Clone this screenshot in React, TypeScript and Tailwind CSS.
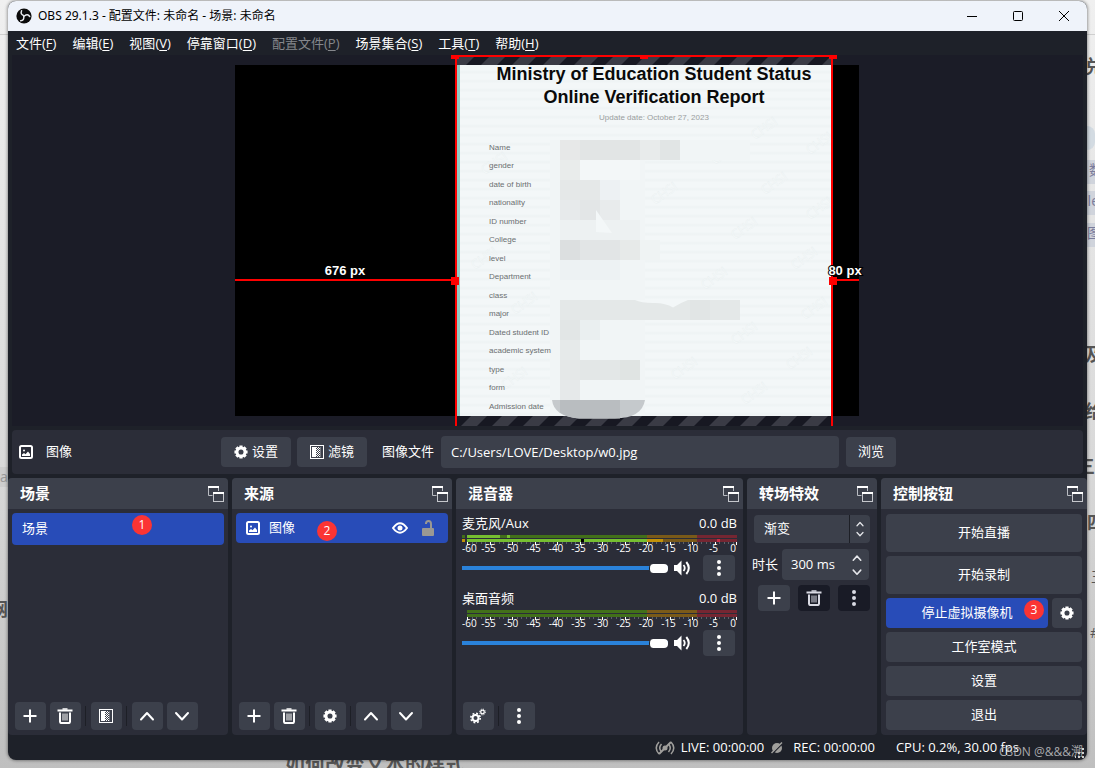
import type { ReactNode } from "react";

const menus = [
  { label: "文件", hotkey: "F" },
  { label: "编辑", hotkey: "E" },
  { label: "视图", hotkey: "V" },
  { label: "停靠窗口", hotkey: "D" },
  { label: "配置文件", hotkey: "P", disabled: true },
  { label: "场景集合", hotkey: "S" },
  { label: "工具", hotkey: "T" },
  { label: "帮助", hotkey: "H" },
];

const reportFields = [
  "Name",
  "gender",
  "date of birth",
  "nationality",
  "ID number",
  "College",
  "level",
  "Department",
  "class",
  "major",
  "Dated student ID",
  "academic system",
  "type",
  "form",
  "Admission date",
];

// x, y, width, height, fill
const mosaic: [number, number, number, number, string][] = [
  [315, 85, 95, 280, "#f1f5f6"],
  [405, 85, 110, 20, "#f1f5f6"],
  [325, 85, 20, 20, "#e7e8e8"],
  [345, 85, 60, 20, "#e2e5e5"],
  [405, 85, 20, 20, "#e8ebeb"],
  [425, 85, 20, 20, "#e1e5e5"],
  [325, 105, 20, 20, "#e9eceb"],
  [345, 105, 60, 20, "#f3f7f8"],
  [325, 125, 40, 20, "#e5e8e8"],
  [365, 125, 20, 20, "#edf1f3"],
  [325, 145, 20, 20, "#e7eaeb"],
  [345, 145, 20, 20, "#e3e6e7"],
  [365, 145, 20, 20, "#e8ebec"],
  [325, 165, 80, 20, "#edf1f2"],
  [325, 185, 20, 20, "#dcdfe0"],
  [345, 185, 40, 20, "#e2e5e6"],
  [385, 185, 20, 20, "#e7eae9"],
  [405, 185, 20, 20, "#eff3f3"],
  [325, 205, 60, 20, "#edf2f3"],
  [325, 245, 180, 20, "#e4e8e8"],
  [455, 245, 20, 20, "#e1e5e5"],
  [325, 265, 20, 20, "#e2e6e6"],
  [345, 265, 20, 20, "#eaeff0"],
  [325, 285, 20, 20, "#e6eaea"],
  [325, 305, 20, 20, "#e5e8e8"],
  [345, 305, 60, 20, "#e3e7e7"],
  [385, 305, 20, 20, "#e0e4e3"],
  [325, 325, 20, 20, "#e6e9ea"],
];

const watermarks = [
  [250, 120], [520, 85], [480, 110], [575, 100], [530, 140], [420, 150], [575, 165],
  [500, 185], [240, 215], [560, 215], [470, 235], [570, 265], [280, 260], [500, 290],
  [555, 315], [440, 325], [270, 335], [510, 350],
];

function ObsLogo() {
  return (
    <svg width="16" height="16" viewBox="0 0 16 16" fill="none">
      <circle cx="8" cy="8" r="7.6" fill="#0b0b0b" />
      <g stroke="#e6e8ec" strokeWidth="1.5" strokeLinecap="round">
        <path d="M5.600 2.800q-1.600 3.400 2.200 4.800" />
        <path d="M5.600 2.800q-1.600 3.400 2.200 4.800" transform="rotate(120 8 8)" />
        <path d="M5.600 2.800q-1.600 3.400 2.200 4.800" transform="rotate(240 8 8)" />
      </g>
    </svg>
  );
}

function Gear({ size = 16 }: { size?: number }) {
  return (
    <svg width={size} height={size} viewBox="0 0 16 16" fill="none" stroke="currentColor">
      <circle cx="8" cy="8" r="4.6" strokeWidth="3.4" />
      <path
        d="M8 0.500v3M8 12.500v3M0.500 8h3M12.500 8h3M2.700 2.700l2 2M11.300 11.300l2 2M13.300 2.700l-2 2M4.700 11.300l-2 2"
        strokeWidth="3.600"
      />
    </svg>
  );
}

function Gears() {
  return (
    <svg width="16" height="16" viewBox="0 0 16 16" fill="none" stroke="currentColor">
      <circle cx="5.5" cy="10" r="3" strokeWidth="2" />
      <circle cx="5.5" cy="10" r="4.7" strokeWidth="1.6" strokeDasharray="1.85 1.85" />
      <circle cx="12.5" cy="4" r="1.8" strokeWidth="1.3" />
      <circle cx="12.5" cy="4" r="2.9" strokeWidth="1" strokeDasharray="1.14 1.14" />
    </svg>
  );
}

function Plus() {
  return (
    <svg width="16" height="16" viewBox="0 0 16 16" stroke="currentColor" strokeWidth="2">
      <path d="M8 1.5v13M1.5 8h13" />
    </svg>
  );
}

function Trash() {
  return (
    <svg width="16" height="16" viewBox="0 0 16 16" fill="none" stroke="currentColor">
      <path d="M0.500 2.500h15" strokeWidth="2" />
      <path d="M5.5 1h5" strokeWidth="1.6" />
      <path d="M3 4.5v9q0 1.6 1.6 1.6h6.8q1.6 0 1.6-1.6v-9" strokeWidth="2" />
      <path d="M6 5.5v7M8 5.5v7M10 5.5v7" strokeWidth="1" />
    </svg>
  );
}

function FilterIcon() {
  return (
    <svg width="14" height="14" viewBox="0 0 14 14" shapeRendering="crispEdges">
      <rect x="0.5" y="0.5" width="13" height="13" fill="none" stroke="currentColor" />
      <rect x="2" y="2" width="4" height="10" fill="currentColor" />
      <path
        d="M6.5 2v10M8.5 2v10M7.5 3v10M9.5 3v10"
        stroke="currentColor"
        strokeDasharray="1 1"
      />
      <path d="M10.5 2v10" stroke="currentColor" strokeOpacity="0.3" />
    </svg>
  );
}

function Chevron({ up = false, size = 16 }: { up?: boolean; size?: number }) {
  return (
    <svg
      width={size}
      height={size}
      viewBox="0 0 16 16"
      fill="none"
      stroke="currentColor"
      strokeWidth={size < 16 ? 2.5 : 2}
      strokeLinecap="round"
      strokeLinejoin="round"
    >
      <path d={up ? "M2 11.5l6-6.5 6 6.5" : "M2 5l6 6.5L14 5"} />
    </svg>
  );
}

function Dots() {
  return (
    <svg width="16" height="18" viewBox="0 0 16 18" fill="currentColor">
      <circle cx="8" cy="3" r="2" />
      <circle cx="8" cy="9" r="2" />
      <circle cx="8" cy="15" r="2" />
    </svg>
  );
}

function Picture() {
  return (
    <svg width="14" height="14" viewBox="0 0 14 14">
      <rect x="1" y="1" width="12" height="12" rx="1.5" fill="none" stroke="white" strokeWidth="2" />
      <circle cx="5" cy="5.5" r="1" fill="white" />
      <path d="M3 11V9.5L5 8l1.5 1.2L9 6.5l2 2.5v2z" fill="white" />
    </svg>
  );
}

function Speaker() {
  return (
    <svg width="16" height="16" viewBox="0 0 16 16" fill="none" stroke="white">
      <path d="M0 5h3l4.500-4.500v15L3 11H0z" fill="white" stroke="none" />
      <path d="M9.500 5q2.500 3 0 6" strokeWidth="1.8" />
      <path d="M12.300 2q5 6 0 12" strokeWidth="2" />
    </svg>
  );
}

function FloatIcon() {
  return (
    <svg width="16" height="16" viewBox="0 0 16 16" fill="none">
      <path d="M4.5 9.5h-4V1M10.500 5V1" stroke="#b9bcc2" />
      <path d="M0 1h11" stroke="#fff" strokeWidth="2" />
      <rect x="5.500" y="7.500" width="10" height="8" fill="#3c404b" stroke="#c5c7cc" />
      <path d="M5 7h11" stroke="#fff" strokeWidth="2" />
    </svg>
  );
}

function ToolButton({ label, children }: { label: string; children: ReactNode }) {
  return (
    <button
      aria-label={label}
      className="flex h-7 w-[31px] items-center justify-center rounded bg-[#3c404b] pr-px text-white"
    >
      {children}
    </button>
  );
}

function Separator() {
  return <span className="h-5 w-0.5 border-l border-[#1d1f26]" />;
}

function Badge({ n, className }: { n: number; className: string }) {
  return (
    <span
      className={`absolute flex size-5 items-center justify-center rounded-full bg-[#fb3434] text-xs text-white ${className}`}
    >
      {n}
    </span>
  );
}

function Dock({ title, children }: { title: string; children: ReactNode }) {
  return (
    <section className="flex min-w-0 flex-col overflow-hidden rounded bg-[#2b2d38]">
      <header className="flex h-[31px] items-center justify-between bg-[#3c404b] pl-3 pr-1">
        <h2 className="text-[15px] font-bold">{title}</h2>
        <button aria-label={`${title} 浮动`}>
          <FloatIcon />
        </button>
      </header>
      {children}
    </section>
  );
}

function Meter({ active }: { active: boolean }) {
  const ticks = Array.from({ length: 61 }, (_, i) => i);
  return (
    <svg viewBox="0 0 275 20" className="w-full" aria-hidden="true">
      {[0, 4].map((y) => (
        <g key={y} shapeRendering="crispEdges">
          <rect x="5" y={y} width="180" height="3" fill="#42701a" />
          <rect x="185" y={y} width="50" height="3" fill="#7a5a19" />
          <rect x="235" y={y} width="40" height="3" fill="#752632" />
        </g>
      ))}
      {active && (
        <g shapeRendering="crispEdges">
          <rect x="0" y="0" width="3" height="3" fill="#42701a" />
          <rect x="0" y="4" width="3" height="3" fill="#c29208" />
          <rect x="5" y="0" width="33" height="3" fill="#76bf31" />
          <rect x="45" y="0" width="3" height="3" fill="#76bf31" />
          <rect x="5" y="4" width="180" height="3" fill="#76bf31" />
          <rect x="185" y="4" width="16" height="3" fill="#c29208" />
          <rect x="119" y="4" width="3" height="3" fill="#000" />
          <rect x="255" y="4" width="3" height="3" fill="#c52c45" />
        </g>
      )}
      {ticks.map((i) => (
        <rect
          key={i}
          x={Math.min(5 + Math.round(i * 4.5), 274)}
          y="7"
          width="1"
          height={i % 5 === 0 ? 3 : 2}
          fill={i % 5 === 0 ? "#fff" : "#5d616b"}
          shapeRendering="crispEdges"
        />
      ))}
      {ticks
        .filter((i) => i % 5 === 0)
        .map((i) => (
          <text
            key={i}
            x={i === 60 ? 274 : i === 0 ? 0 : 4 + i * 4.5}
            y="17"
            fontSize="10"
            fill="#fff"
            textAnchor={i === 60 ? "end" : i === 0 ? "start" : "middle"}
          >
            {i - 60}
          </text>
        ))}
    </svg>
  );
}

function Channel({ name, active = false }: { name: string; active?: boolean }) {
  return (
    <div className="flex h-[75px] flex-col">
      <div className="flex h-[26px] items-center justify-between pt-1">
        <span>{name}</span>
        <span>0.0 dB</span>
      </div>
      <Meter active={active} />
      <div className="flex items-center pr-0.5">
        <input
          type="range"
          aria-label={name}
          defaultValue={100}
          className="h-[9px] min-w-0 flex-1 appearance-none bg-[linear-gradient(#2a82da,#2a82da)] bg-[length:100%_4px] bg-center bg-no-repeat [&::-webkit-slider-thumb]:h-[9px] [&::-webkit-slider-thumb]:w-[19px] [&::-webkit-slider-thumb]:appearance-none [&::-webkit-slider-thumb]:rounded-sm [&::-webkit-slider-thumb]:border-l [&::-webkit-slider-thumb]:border-[#1e2129] [&::-webkit-slider-thumb]:bg-white"
        />
        <button aria-label={`${name} 静音`} className="ml-1.5 mr-[13px]">
          <Speaker />
        </button>
        <button
          aria-label={`${name} 选项`}
          className="flex h-[26px] w-8 items-center justify-center rounded bg-[#3c404b]"
        >
          <Dots />
        </button>
      </div>
    </div>
  );
}

function Preview() {
  return (
    <div className="mx-1 flex min-h-[371px] flex-1 items-center justify-center overflow-hidden bg-[#1b1c27] pr-px">
      <div className="relative h-[351px] w-[624px] shrink-0 bg-black">
        <div className="absolute inset-y-0 left-[222px] w-[375px] border-l-[3px] border-[#93cbc4] bg-[#f2f7f8] bg-[repeating-linear-gradient(#f3f7f8_0px,#f3f7f8_5px,#eef3f4_7px,#f2f6f7_9px)] font-['Liberation_Sans',sans-serif]">
          <h1 className="-mt-0.5 pl-4 text-center text-[18px] font-bold leading-[23px] text-[#0a0a0a]">
            <span className="block">Ministry of Education Student Status</span>
            <span className="block">Online Verification Report</span>
          </h1>
          <p className="mt-px pl-4 text-center text-[8px] leading-4 text-[#9a9ea0]">
            Update date: October 27, 2023
          </p>
        </div>

        <svg
          className="absolute -top-2.5 left-0 overflow-visible"
          width="624"
          height="371"
          viewBox="0 0 624 371"
          aria-hidden="true"
        >
          <defs>
            <pattern
              id="overflow"
              width="31"
              height="400"
              patternUnits="userSpaceOnUse"
              patternTransform="skewX(-45)"
            >
              <rect width="31" height="400" fill="#171822" />
              <rect x="8" width="16" height="400" fill="#3a3b45" />
            </pattern>
          </defs>
          {watermarks.map(([x, y]) => (
            <text
              key={`${x}-${y}`}
              x={x}
              y={y}
              fontSize="13"
              fill="#fafdfd"
              fillOpacity="0.7"
              stroke="#e6edee"
              strokeWidth="0.3"
              transform={`rotate(-35 ${x} ${y})`}
            >
              CHSI
            </text>
          ))}
          {mosaic.map(([x, y, w, h, fill]) => (
            <rect key={`${x}-${y}-${w}`} x={x} y={y} width={w} height={h} fill={fill} />
          ))}
          <path d="M361 155v22l16 1z" fill="#f3f7f8" />
          <path d="M400 245h53q-8 3-15 7.500q-8-5-20-4.500q-12 0-18-3z" fill="#f3f7f8" />
          <rect x="222" y="2" width="375" height="8" fill="url(#overflow)" />
          <rect x="222" y="361" width="375" height="10" fill="url(#overflow)" />
          <path d="M317 345h93q-3 18-30 18.500h-36q-25-2-27-18.500z" fill="#c5c9cc" />
          <path d="M325 345h60v18.500h-41q-12-1-19-6z" fill="#b9bdc0" />
          <g fill="#fe0000">
            <rect x="220" y="0" width="378" height="2" />
            <rect x="220" y="0" width="2" height="371" />
            <rect x="596" y="0" width="2" height="371" />
            <rect x="0" y="224" width="220" height="2" />
            <rect x="598" y="224" width="26" height="2" />
            <rect x="216" y="0" width="8" height="4" />
            <rect x="405" y="0" width="8" height="4" />
            <rect x="594" y="0" width="8" height="4" />
            <rect x="216" y="222" width="8" height="8" />
            <rect x="594" y="222" width="8" height="8" />
          </g>
          <g
            className="font-['Liberation_Sans',sans-serif]"
            fontSize="13"
            fontWeight="700"
            fill="#fff"
            stroke="#000"
            strokeWidth="2"
            paintOrder="stroke"
            textAnchor="middle"
          >
            <text x="110" y="220">676 px</text>
            <text x="610" y="220">80 px</text>
          </g>
        </svg>

        <ul className="absolute left-[254px] top-[73px] font-['Liberation_Sans',sans-serif] text-[8px] text-[#6b6f71]">
          {reportFields.map((field, i) => (
            <li key={field} className={i % 2 ? "leading-[18px]" : "leading-[19px]"}>
              {field}
            </li>
          ))}
        </ul>
      </div>
    </div>
  );
}

function Backdrop() {
  return (
    <div
      aria-hidden="true"
      className="absolute inset-0 overflow-hidden bg-[linear-gradient(#f0f0f0,#d9d9d9_60%,#bfbfbf)] text-[#555]"
    >
      <div className="absolute right-0 top-[34px] w-2 border-t border-[#cfcfcf]" />
      <div className="absolute left-0 top-[34px] w-2 border-t border-[#cfcfcf]" />
      <div className="absolute right-0 top-[126px] h-6 w-2 rounded-r-xl bg-[#d3dbe2]" />
      <div className="absolute right-0 top-[160px] h-6 w-2 bg-[#d0d4dc]" />
      <div className="absolute right-0 top-[191px] h-6 w-2 bg-[#d0d4dc]" />
      <div className="absolute right-0 top-[223px] h-6 w-2 bg-[#d0d4dc]" />
      <span className="absolute -right-2 top-[52px] text-lg font-bold">兑</span>
      <span className="absolute -right-2 top-[160px] text-sm text-[#7a7c9c]">数</span>
      <span className="absolute -right-1 top-[191px] text-sm text-[#7a7c9c]">le</span>
      <span className="absolute -right-1.5 top-[223px] text-sm text-[#7a7c9c]">图</span>
      <span className="absolute -right-2 top-[340px] text-lg font-bold">及</span>
      <span className="absolute -right-2 top-[397px] text-lg font-bold">给</span>
      <span className="absolute right-0 top-[452px] text-lg font-bold">三</span>
      <span className="absolute -right-2.5 top-[508px] text-lg font-bold">四</span>
      <span className="absolute -right-2.5 top-[567px] text-sm">王</span>
      <span className="absolute -right-1 top-[623px] text-sm">#</span>
      <span className="absolute left-0 top-[467px] bg-[#cdcdcd] text-sm text-[#999]">as</span>
      <span className="absolute -left-2.5 top-[595px] text-lg font-bold">网</span>
      <span className="absolute left-[285px] top-[753px] text-xl font-bold leading-6">
        如何改变文本的样式
      </span>
    </div>
  );
}

export default function App() {
  return (
    <div className="relative flex min-h-screen flex-col px-2 pb-2 pt-px font-['Open_Sans','Noto_Sans_CJK_SC',sans-serif] text-[13px] text-white">
      <Backdrop />
      <main className="relative flex flex-1 flex-col overflow-hidden rounded-lg bg-[#1e2129] shadow-[0_0_3px_1px_rgba(0,0,0,0.35)]">
        <div className="flex h-[30px] items-center bg-[#eff3fa] pl-2 text-black">
          <ObsLogo />
          <span className="ml-1.5 font-['Noto_Sans','Noto_Sans_CJK_SC',sans-serif] text-xs">
            OBS 29.1.3 - 配置文件: 未命名 - 场景: 未命名
          </span>
          <div className="ml-auto flex">
            <button aria-label="最小化" className="flex h-[30px] w-[46px] items-center justify-center">
              <svg width="10" height="10" stroke="currentColor">
                <path d="M0 5.500h10" />
              </svg>
            </button>
            <button aria-label="最大化" className="flex h-[30px] w-[46px] items-center justify-center">
              <svg width="10" height="10" fill="none" stroke="currentColor">
                <rect x="0.500" y="0.500" width="9" height="9" rx="1" />
              </svg>
            </button>
            <button aria-label="关闭" className="flex h-[30px] w-[46px] items-center justify-center">
              <svg width="10" height="10" stroke="currentColor">
                <path d="M0 0l10 10M10 0L0 10" />
              </svg>
            </button>
          </div>
        </div>

        <nav className="flex h-6 items-center">
          {menus.map((menu) => (
            <button
              key={menu.hotkey}
              disabled={menu.disabled}
              className="px-2 leading-6 disabled:text-[#85878c]"
            >
              {menu.label}(<u className="underline-offset-2">{menu.hotkey}</u>)
            </button>
          ))}
        </nav>

        <Preview />

        <div className="mx-1 mt-1 flex h-11 items-center rounded bg-[#2b2d38]">
          <div className="flex w-[209px] items-center gap-[13px] pl-[7px]">
            <Picture />
            <span>图像</span>
          </div>
          <button className="flex h-[30px] w-[70px] items-center justify-center gap-1 rounded bg-[#3c404b]">
            <Gear size={14} />
            设置
          </button>
          <button className="ml-1.5 flex h-[30px] w-[70px] items-center justify-center gap-1 rounded bg-[#3c404b]">
            <FilterIcon />
            滤镜
          </button>
          <label htmlFor="image-file" className="ml-[15px] mr-[7px]">
            图像文件
          </label>
          <input
            id="image-file"
            readOnly
            defaultValue="C:/Users/LOVE/Desktop/w0.jpg"
            className="h-8 min-w-0 flex-1 rounded bg-[#3c404b] px-2.5"
          />
          <button className="ml-[7px] mr-[187px] h-[30px] w-[50px] rounded bg-[#3c404b]">浏览</button>
        </div>

        <div className="mt-1 grid min-h-[257px] grid-cols-[220fr_220fr_287fr_130fr_206fr] gap-1">
          <Dock title="场景">
            <div className="relative m-1 flex h-8 items-center rounded bg-[#284cb8] px-2.5">
              场景
              <Badge n={1} className="left-[120px] top-0.5" />
            </div>
            <div className="mt-auto flex items-center gap-1 px-[7px] pb-[5px]">
              <ToolButton label="添加场景"><Plus /></ToolButton>
              <ToolButton label="移除场景"><Trash /></ToolButton>
              <Separator />
              <ToolButton label="场景滤镜"><FilterIcon /></ToolButton>
              <Separator />
              <ToolButton label="上移场景"><Chevron up /></ToolButton>
              <ToolButton label="下移场景"><Chevron /></ToolButton>
            </div>
          </Dock>

          <Dock title="来源">
            <div className="relative m-1 flex h-[30px] items-center rounded bg-[#284cb8] pl-2.5 pr-3.5">
              <Picture />
              <span className="ml-[9px]">图像</span>
              <Badge n={2} className="left-[81px] top-2" />
              <button aria-label="可见性" className="ml-auto">
                <svg width="16" height="12" viewBox="0 0 16 12" fill="none" stroke="white">
                  <path d="M1 6q7-9.500 14 0q-7 9.500-14 0z" strokeWidth="2" />
                  <circle cx="8" cy="6" r="2.500" fill="white" stroke="none" />
                </svg>
              </button>
              <button aria-label="锁定" className="ml-3.5">
                <svg width="12" height="16" viewBox="0 0 12 16" fill="none">
                  <rect x="0" y="8" width="12" height="8" rx="1" fill="#9a9893" />
                  <path d="M9 8V4q0-3-2.500-3T4 3.500V4" stroke="#9a9893" strokeWidth="2" />
                </svg>
              </button>
            </div>
            <div className="mt-auto flex items-center gap-1 px-[7px] pb-[5px]">
              <ToolButton label="添加来源"><Plus /></ToolButton>
              <ToolButton label="移除来源"><Trash /></ToolButton>
              <Separator />
              <ToolButton label="来源属性"><Gear size={14} /></ToolButton>
              <Separator />
              <ToolButton label="上移来源"><Chevron up /></ToolButton>
              <ToolButton label="下移来源"><Chevron /></ToolButton>
            </div>
          </Dock>

          <Dock title="混音器">
            <div className="px-1.5">
              <Channel name="麦克风/Aux" active />
              <Channel name="桌面音频" />
            </div>
            <div className="mt-auto flex items-center gap-1 px-[7px] pb-[5px]">
              <ToolButton label="高级音频属性"><Gears /></ToolButton>
              <Separator />
              <ToolButton label="混音器菜单"><Dots /></ToolButton>
            </div>
          </Dock>

          <Dock title="转场特效">
            <div className="flex flex-col gap-1.5 pl-[5px] pr-[7px] pt-1.5">
              <div className="relative ml-0.5">
                <select
                  aria-label="转场特效"
                  className="h-7 w-full appearance-none rounded bg-[#3c404b] px-2.5"
                >
                  <option>渐变</option>
                </select>
                <span className="pointer-events-none absolute inset-y-0 right-0 flex w-[21px] flex-col items-center justify-center gap-0.5 border-l border-[#1d1f26] text-[#e5e6ea]">
                  <Chevron up size={8} />
                  <Chevron size={8} />
                </span>
              </div>
              <div className="flex items-center justify-between">
                <label htmlFor="duration">时长</label>
                <div className="mr-px flex h-[31px] w-[87px] rounded bg-[#3c404b]">
                  <input id="duration" defaultValue="300 ms" className="w-0 flex-1 pl-[9px]" />
                  <div className="flex w-6 flex-col items-center justify-center gap-1 text-[#e5e6ea]">
                    <button aria-label="增加"><Chevron up size={10} /></button>
                    <button aria-label="减少"><Chevron size={10} /></button>
                  </div>
                </div>
              </div>
              <div className="-mt-px flex justify-end gap-2">
                <button aria-label="添加转场" className="flex h-[26px] w-8 items-center justify-center rounded bg-[#3c404b]">
                  <Plus />
                </button>
                <button aria-label="移除转场" className="flex h-[26px] w-8 items-center justify-center rounded bg-[#191b26] text-[#d9dae3]">
                  <Trash />
                </button>
                <button aria-label="转场选项" className="flex h-[26px] w-8 items-center justify-center rounded bg-[#191b26] text-[#d9dae3]">
                  <Dots />
                </button>
              </div>
            </div>
          </Dock>

          <Dock title="控制按钮">
            <div className="flex flex-1 flex-col gap-1 p-[5px]">
              <button className="h-[38px] rounded bg-[#3c404b]">开始直播</button>
              <button className="h-[38px] rounded bg-[#3c404b]">开始录制</button>
              <div className="flex gap-1">
                <button className="relative h-[30px] flex-1 rounded bg-[#284cb8]">
                  停止虚拟摄像机
                  <Badge n={3} className="right-1 top-0.5" />
                </button>
                <button aria-label="虚拟摄像机设置" className="flex size-[30px] items-center justify-center rounded bg-[#3c404b]">
                  <Gear size={14} />
                </button>
              </div>
              <button className="h-[30px] rounded bg-[#3c404b]">工作室模式</button>
              <button className="h-[30px] rounded bg-[#3c404b]">设置</button>
              <button className="h-[30px] rounded bg-[#3c404b]">退出</button>
            </div>
          </Dock>
        </div>

        <footer className="flex h-[25px] items-center justify-end pr-[68px] pt-px">
          <svg width="20" height="14" viewBox="0 0 20 14" fill="none" stroke="#a09f9c" strokeWidth="1.500">
            <path d="M4 1Q-1.500 7 4 13M16 1q5.500 6 0 12M6.500 3Q3 7 6.500 11M13.500 3q3.500 4 0 8" />
            <circle cx="10" cy="7" r="2.500" fill="#a09f9c" stroke="none" />
            <path d="M4 13L16 1" strokeWidth="2" />
          </svg>
          <span className="ml-1.5">LIVE: 00:00:00</span>
          <svg className="ml-[7px]" width="12" height="12" viewBox="0 0 12 12">
            <circle cx="6" cy="6" r="5" fill="#a09f9c" />
            <path d="M1 12L12 1" stroke="#1e2129" strokeWidth="1.500" />
            <path d="M0.500 11L11 0.500" stroke="#a09f9c" strokeWidth="1.500" />
          </svg>
          <span className="ml-2.5">REC: 00:00:00</span>
          <span className="ml-[21px]">CPU: 0.2%, 30.00 fps</span>
        </footer>

        <span className="absolute bottom-0 right-1 text-xs leading-4 text-[#a9aaad]">CSDN @&amp;&amp;&amp;溯</span>
        <svg className="absolute bottom-0.5 right-0.5" width="10" height="10" fill="#d0d0d0" aria-hidden="true">
          <path d="M7 0h2v2H7zM7 4h2v2H7zM7 8h2v2H7zM3 4h2v2H3zM3 8h2v2H3zM0 8h1v2H0z" />
        </svg>
      </main>
    </div>
  );
}
